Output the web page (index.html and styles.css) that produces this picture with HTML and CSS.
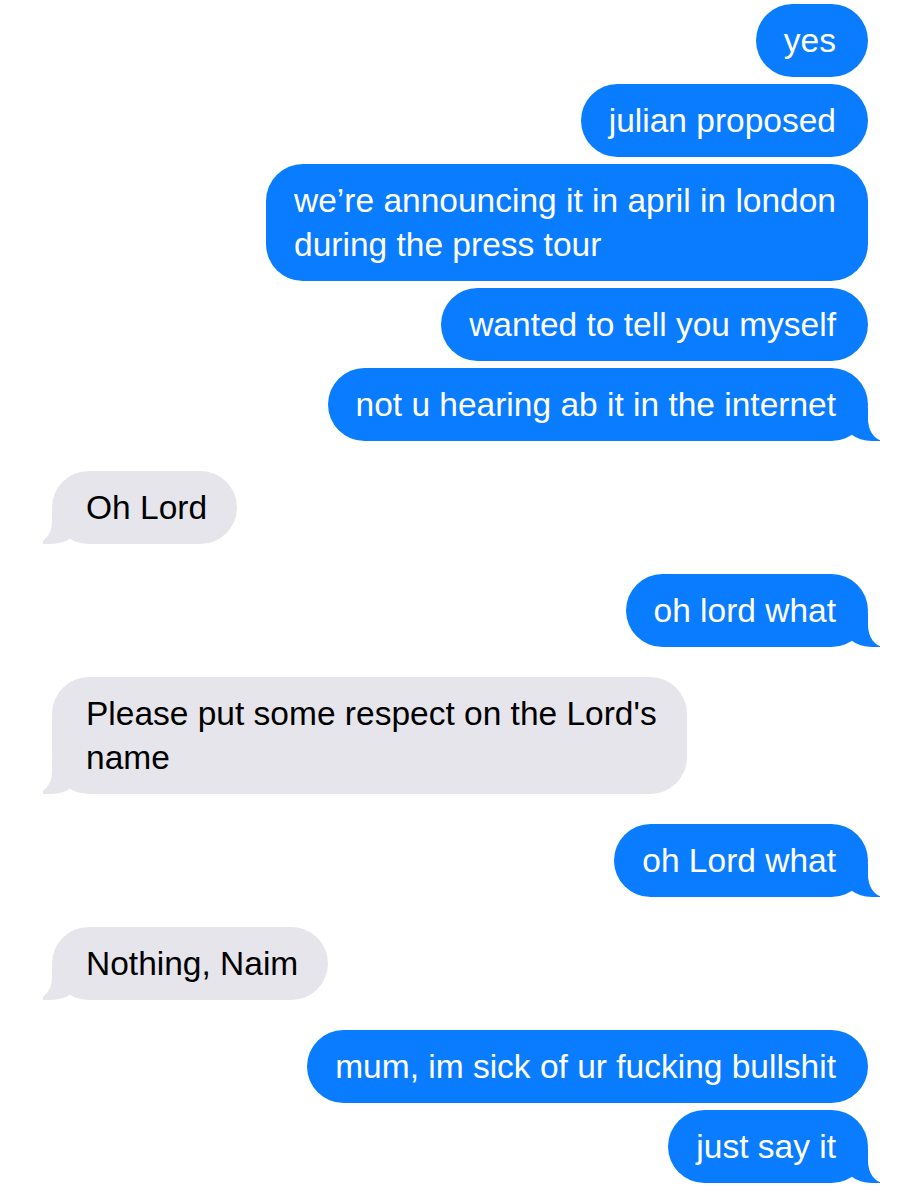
FILE: index.html
```html
<!DOCTYPE html>
<html lang="en">
<head>
<meta charset="utf-8">
<title>Messages</title>
<link rel="stylesheet" href="styles.css">
</head>
<body>
<main class="thread">
  <section class="group sent">
    <div class="bubble">yes</div>
    <div class="bubble">julian proposed</div>
    <div class="bubble">we’re announcing it in april in london<br>during the press tour</div>
    <div class="bubble">wanted to tell you myself</div>
    <div class="bubble tail">not u hearing ab it in the internet</div>
  </section>
  <section class="group received">
    <div class="bubble tail">Oh Lord</div>
  </section>
  <section class="group sent">
    <div class="bubble tail">oh lord what</div>
  </section>
  <section class="group received">
    <div class="bubble tail">Please put some respect on the Lord's<br>name</div>
  </section>
  <section class="group sent">
    <div class="bubble tail">oh Lord what</div>
  </section>
  <section class="group received">
    <div class="bubble tail">Nothing, Naim</div>
  </section>
  <section class="group sent">
    <div class="bubble">mum, im sick of ur fucking bullshit</div>
    <div class="bubble tail">just say it</div>
  </section>
</main>
</body>
</html>
```
FILE: styles.css
```css
html, body {
  margin: 0;
  padding: 0;
  background: #ffffff;
}

body {
  font-family: "Liberation Sans", Arial, sans-serif;
  font-size: 33.5px;
  line-height: 44px;
  -webkit-font-smoothing: antialiased;
}

.thread {
  display: flex;
  flex-direction: column;
  gap: 30px;
  padding: 4px 55px 20px 52px;
}

.group {
  display: flex;
  flex-direction: column;
  gap: 7px;
}

.group.sent {
  align-items: flex-end;
}

.group.received {
  align-items: flex-start;
}

.bubble {
  position: relative;
  padding: 15px 32px 14px 28px;
  border-radius: 37px;
  white-space: nowrap;
}

.sent .bubble {
  background: #0a7cff;
  color: #ffffff;
}

.received .bubble {
  background: #e6e5eb;
  color: #000000;
  padding: 15px 30px 14px 34px;
}

/* tails */
.bubble.tail::before,
.bubble.tail::after {
  content: "";
  position: absolute;
  bottom: 0;
  height: 34px;
}

.sent .bubble.tail::before {
  right: -12px;
  width: 38px;
  background: #0a7cff;
  border-bottom-left-radius: 30px 24px;
}

.sent .bubble.tail::after {
  right: -28px;
  width: 28px;
  background: #ffffff;
  border-bottom-left-radius: 16px 22px;
}

.received .bubble.tail::before {
  left: -9px;
  width: 38px;
  background: #e6e5eb;
  border-bottom-right-radius: 30px 24px;
}

.received .bubble.tail::after {
  left: -28px;
  width: 28px;
  background: #ffffff;
  border-bottom-right-radius: 19px 22px;
}
```
